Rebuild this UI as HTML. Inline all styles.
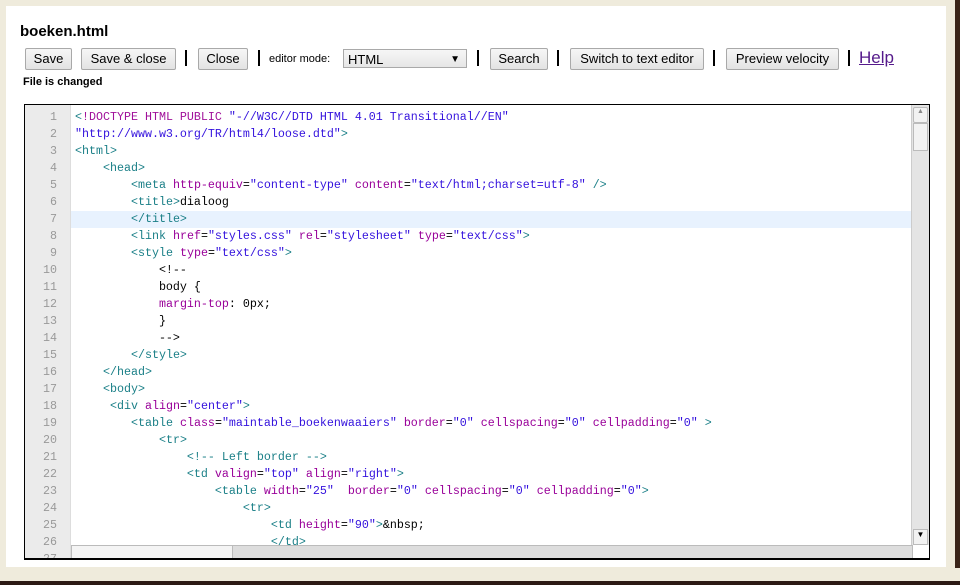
<!DOCTYPE html>
<html><head><style>
body{margin:0;width:960px;height:585px;background:#efebdc;position:relative;overflow:hidden;font-family:"Liberation Sans",Arial,sans-serif}
#dark{position:absolute;left:955px;top:0;width:5px;height:585px;background:#3a2418}
#bot{position:absolute;left:0;top:568px;width:960px;height:17px;background:#efebdc}
#bot2{position:absolute;left:0;top:581px;width:960px;height:4px;background:#2c1a14}
#panel{position:absolute;left:6px;top:6px;width:940px;height:561px;background:#fff}
h1{position:absolute;left:20px;top:23px;margin:0;font-size:15px;font-weight:bold;color:#000}
.btn{position:absolute;top:48px;height:20px;border:1px solid #a9a9a9;border-radius:2px;background:linear-gradient(#f6f6f6,#e3e3e3);font-size:13px;line-height:20px;text-align:center;color:#000}
.sep{position:absolute;top:50px;width:2px;height:16px;background:#000}
.lbl{position:absolute;top:53px;font-size:11px;left:269px}
.sel{position:absolute;left:343px;top:49px;height:19px;border:1px solid #a9a9a9;background:linear-gradient(#f6f6f6,#e6e6e6);font-size:13px;line-height:19px;padding-left:4px;box-sizing:border-box;width:124px}
.help{position:absolute;left:859px;top:48px;font-size:17px;color:#551a8b;text-decoration:underline}
.chg{position:absolute;left:23px;top:76px;font-size:11px;font-weight:bold}
#ed{position:absolute;left:24px;top:104px;width:906px;height:456px;border:1px solid #000;border-bottom-width:2px;box-sizing:border-box;background:#fff;overflow:hidden}
#gut{position:absolute;left:0;top:0;width:45px;height:100%;background:#ebebeb;border-right:1px solid #ddd}
.ln{position:absolute;left:0;width:32px;text-align:right;color:#999;font:11.67px "Liberation Mono",monospace}
.cl{position:absolute;left:50px;white-space:pre;font:11.67px "Liberation Mono",monospace;color:#000}
.t{color:#1a7f87}.a{color:#990099}.s{color:#3311dd}.d{color:#a0109a}
#act{position:absolute;left:46px;top:106px;width:842px;height:17px;background:#e8f2fe}
#vs{position:absolute;right:0;top:0;width:17px;height:440px;background:#e4e4e4;border-left:1px solid #ccc}
#hs{position:absolute;left:46px;top:440px;width:842px;height:14px;background:#ddd;border:1px solid #bbb;box-sizing:border-box}
</style></head><body>
<div id="dark"></div><div id="bot"></div><div id="bot2"></div>
<div id="panel"></div>
<h1>boeken.html</h1>
<div class="btn" style="left:25px;width:45px">Save</div>
<div class="btn" style="left:81px;width:93px">Save &amp; close</div>
<div class="sep" style="left:185px"></div>
<div class="btn" style="left:198px;width:48px">Close</div>
<div class="sep" style="left:258px"></div>
<div class="lbl">editor mode:</div>
<div class="sel">HTML<span style="position:absolute;right:6px;font-size:10px">▼</span></div>
<div class="sep" style="left:477px"></div>
<div class="btn" style="left:490px;width:56px">Search</div>
<div class="sep" style="left:557px"></div>
<div class="btn" style="left:570px;width:132px">Switch to text editor</div>
<div class="sep" style="left:713px"></div>
<div class="btn" style="left:726px;width:111px">Preview velocity</div>
<div class="sep" style="left:848px"></div>
<div class="help">Help</div>
<div class="chg">File is changed</div>
<div id="ed">
<div id="gut"></div>
<div id="act"></div>
<div id="lines"></div>
<div id="vs"><div style="position:absolute;left:1px;top:2px;width:13px;height:14px;background:#f2f2f2;border:1px solid #bbb;border-radius:2px;font-size:7px;text-align:center;color:#888">▲</div><div style="position:absolute;left:1px;top:18px;width:13px;height:26px;background:#f2f2f2;border:1px solid #bbb"></div><div style="position:absolute;left:1px;top:424px;width:13px;height:14px;background:#f2f2f2;border:1px solid #bbb;font-size:8px;text-align:center">▼</div></div>
<div id="hs"><div style="position:absolute;left:0;top:0;width:160px;height:12px;background:#f4f4f4;border-right:1px solid #bbb"></div></div>
</div>
<script>
var L=[
'<span class="t">&lt;</span><span class="d">!DOCTYPE HTML PUBLIC </span><span class="s">"-//W3C//DTD HTML 4.01 Transitional//EN"</span>',
'<span class="s">"http://www.w3.org/TR/html4/loose.dtd"</span><span class="t">&gt;</span>',
'<span class="t">&lt;html&gt;</span>',
'    <span class="t">&lt;head&gt;</span>',
'        <span class="t">&lt;meta</span> <span class="a">http-equiv</span>=<span class="s">"content-type"</span> <span class="a">content</span>=<span class="s">"text/html;charset=utf-8"</span> <span class="t">/&gt;</span>',
'        <span class="t">&lt;title&gt;</span>dialoog',
'        <span class="t">&lt;/title&gt;</span>',
'        <span class="t">&lt;link</span> <span class="a">href</span>=<span class="s">"styles.css"</span> <span class="a">rel</span>=<span class="s">"stylesheet"</span> <span class="a">type</span>=<span class="s">"text/css"</span><span class="t">&gt;</span>',
'        <span class="t">&lt;style</span> <span class="a">type</span>=<span class="s">"text/css"</span><span class="t">&gt;</span>',
'            &lt;!--',
'            body {',
'            <span class="a">margin-top</span>: 0px;',
'            }',
'            --&gt;',
'        <span class="t">&lt;/style&gt;</span>',
'    <span class="t">&lt;/head&gt;</span>',
'    <span class="t">&lt;body&gt;</span>',
'     <span class="t">&lt;div</span> <span class="a">align</span>=<span class="s">"center"</span><span class="t">&gt;</span>',
'        <span class="t">&lt;table</span> <span class="a">class</span>=<span class="s">"maintable_boekenwaaiers"</span> <span class="a">border</span>=<span class="s">"0"</span> <span class="a">cellspacing</span>=<span class="s">"0"</span> <span class="a">cellpadding</span>=<span class="s">"0"</span> <span class="t">&gt;</span>',
'            <span class="t">&lt;tr&gt;</span>',
'                <span class="t">&lt;!-- Left border --&gt;</span>',
'                <span class="t">&lt;td</span> <span class="a">valign</span>=<span class="s">"top"</span> <span class="a">align</span>=<span class="s">"right"</span><span class="t">&gt;</span>',
'                    <span class="t">&lt;table</span> <span class="a">width</span>=<span class="s">"25"</span>  <span class="a">border</span>=<span class="s">"0"</span> <span class="a">cellspacing</span>=<span class="s">"0"</span> <span class="a">cellpadding</span>=<span class="s">"0"</span><span class="t">&gt;</span>',
'                        <span class="t">&lt;tr&gt;</span>',
'                            <span class="t">&lt;td</span> <span class="a">height</span>=<span class="s">"90"</span><span class="t">&gt;</span>&amp;nbsp;',
'                            <span class="t">&lt;/td&gt;</span>',
''];
var h='';
for(var i=0;i<L.length;i++){var y=5+i*17;h+='<div class="ln" style="top:'+y+'px">'+(i+1)+'</div><div class="cl" style="top:'+y+'px">'+L[i]+'</div>';}
document.getElementById('lines').innerHTML=h;
</script>
</body></html>
